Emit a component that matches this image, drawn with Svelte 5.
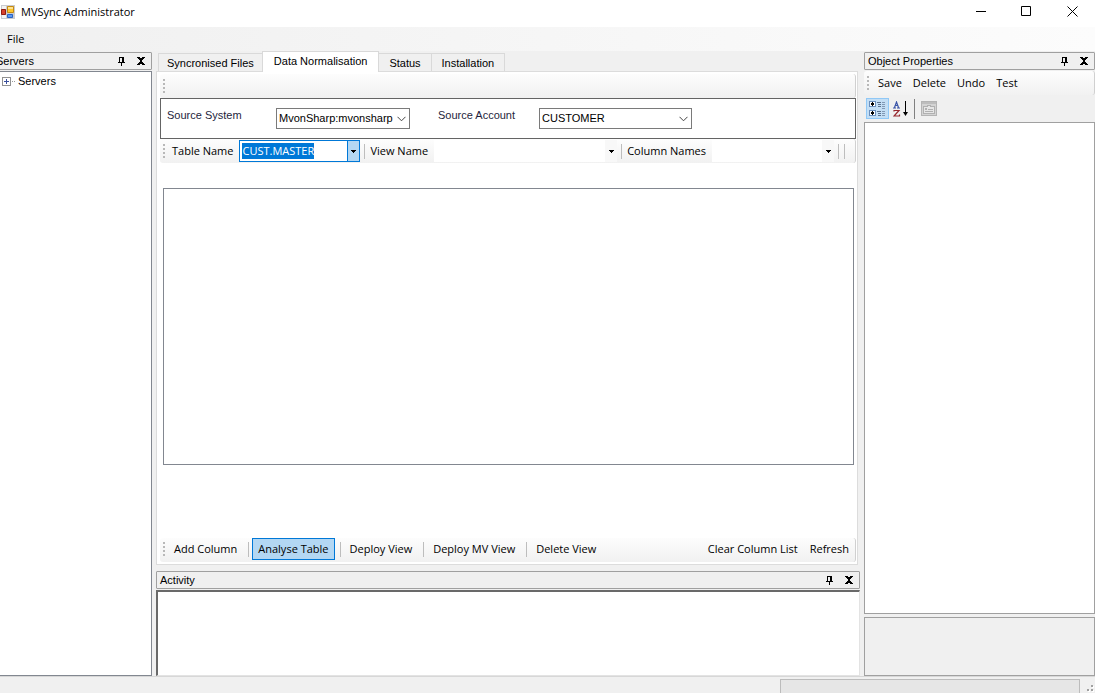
<script>
	import { onMount } from 'svelte';

	let tabs = ['Syncronised Files', 'Data Normalisation', 'Status', 'Installation'];
	let activeTab = $state('Data Normalisation');
	let sourceSystem = $state('MvonSharp:mvonsharp');
	let sourceAccount = $state('CUSTOMER');
	let tableName = $state('CUST.MASTER');
	let viewName = $state('');
	let columnName = $state('');
	let activity = $state('');
	let tableInput;

	const viewActions = ['Add Column', 'Analyse Table', 'Deploy View', 'Deploy MV View', 'Delete View'];
	const objectActions = ['Save', 'Delete', 'Undo', 'Test'];

	onMount(() => {
		tableInput.focus();
		tableInput.select();
	});
</script>

{#snippet grip()}
	<svg class="grip" width="3" height="14" viewBox="0 0 3 14" shape-rendering="crispEdges">
		<path d="M0 0h2v2H0zM0 4h2v2H0zM0 8h2v2H0zM0 12h2v2H0z" fill="#b8b8b8" />
	</svg>
{/snippet}

{#snippet panelTitle(title)}
	<header class="panel-title">
		<h2>{title}</h2>
		<button type="button" aria-label="Auto hide {title}">
			<svg width="7" height="9" viewBox="0 0 7 9" shape-rendering="crispEdges">
				<path d="M1 0h5v5h1v1H4v3H3V6H0V5h1zM2 1v4h2V1z" fill="#000" fill-rule="evenodd" />
			</svg>
		</button>
		<button type="button" aria-label="Close {title}">
			<svg width="8" height="8" viewBox="0 0 8 8" shape-rendering="crispEdges">
				<path
					d="M0 0h3v1h2V0h3v1H7v1H6v1H5v2h1v1h1v1h1v1H5V7H3v1H0V7h1V6h1V5h1V3H2V2H1V1H0z"
				/>
			</svg>
		</button>
	</header>
{/snippet}

{#snippet arrow()}
	<svg width="5" height="3" viewBox="0 0 5 3" shape-rendering="crispEdges">
		<path d="M0 0h5v1H4v1H3v1H2V2H1V1H0z" />
	</svg>
{/snippet}

{#snippet chevron()}
	<svg class="chevron" width="9" height="6" viewBox="0 0 9 6">
		<path d="M.5 .8l4 4 4-4" fill="none" stroke="#444" />
	</svg>
{/snippet}

<div class="window">
	<header class="title-bar">
		<svg width="14" height="14" viewBox="0 0 14 14">
			<path d="M0 0h14v14H0z" fill="#c9cbd0" />
			<path d="M1 1h4v3H1zM1 10h4v3H1z" fill="#f3f3f3" />
			<path d="M6.500 1.500h6v6h-6z" fill="#ffc72e" stroke="#c58a12" />
			<path d="M7 2h5v2H7z" fill="#ffe391" />
			<path d="M.5 4.500h4v5h-4z" fill="#d6402b" stroke="#8e1b11" />
			<path d="M6.500 9.500h5v3h-5z" fill="#5c9af0" stroke="#2a62c4" />
		</svg>
		<h1>MVSync Administrator</h1>
		<div class="window-buttons">
			<button type="button" aria-label="Minimize">
				<svg width="11" height="11" viewBox="0 0 11 11"><path d="M1 5.500h10" stroke="#000" /></svg>
			</button>
			<button type="button" aria-label="Maximize">
				<svg width="11" height="11" viewBox="0 0 11 11">
					<path d="M.5 .5h9v9h-9z" fill="none" stroke="#000" />
				</svg>
			</button>
			<button type="button" aria-label="Close">
				<svg width="11" height="11" viewBox="0 0 11 11">
					<path d="M.5 .5l10 10M10.500 .5l-10 10" stroke="#000" />
				</svg>
			</button>
		</div>
	</header>

	<nav class="menu-bar">
		<button type="button">File</button>
	</nav>

	<main>
		<section class="panel servers">
			{@render panelTitle('Servers')}
			<ul class="tree">
				<li>
					<svg width="13" height="9" viewBox="0 0 13 9" shape-rendering="crispEdges">
						<path d="M.5 .5h8v8h-8z" fill="#fff" stroke="#919191" />
						<path d="M2 4h5v1H2zM4 2h1v5H4z" fill="#3a4f9c" />
						<path d="M10 4h1v1h-1zM12 4h1v1h-1z" fill="#999" />
					</svg>
					Servers
				</li>
			</ul>
		</section>

		<div class="center">
			<div class="tabs" role="tablist">
				{#each tabs as tab}
					<button
						type="button"
						role="tab"
						aria-selected={activeTab === tab}
						class:active={activeTab === tab}
						onclick={() => (activeTab = tab)}
					>
						{tab}
					</button>
				{/each}
			</div>

			<section class="tab-page">
				<div class="toolbar">{@render grip()}</div>

				<div class="source">
					<label for="system">Source System</label>
					<span class="select system">
						<select id="system" bind:value={sourceSystem}>
							<option>MvonSharp:mvonsharp</option>
						</select>
						{@render chevron()}
					</span>
					<label for="account">Source Account</label>
					<span class="select account">
						<select id="account" bind:value={sourceAccount}>
							<option>CUSTOMER</option>
						</select>
						{@render chevron()}
					</span>
				</div>

				<div class="toolbar names">
					{@render grip()}
					<label for="table">Table Name</label>
					<span class="combo table focused">
						<input id="table" type="text" bind:this={tableInput} bind:value={tableName} />
						<button type="button" aria-label="Show tables">{@render arrow()}</button>
					</span>
					<span class="separator"></span>
					<label for="view">View Name</label>
					<span class="combo view">
						<input id="view" type="text" bind:value={viewName} />
						<button type="button" aria-label="Show views">{@render arrow()}</button>
					</span>
					<span class="separator"></span>
					<label for="column">Column Names</label>
					<span class="combo column">
						<input id="column" type="text" bind:value={columnName} />
						<button type="button" aria-label="Show columns">{@render arrow()}</button>
					</span>
					<span class="separator"></span>
					<span class="separator"></span>
				</div>

				<div class="columns"></div>

				<div class="toolbar actions">
					{@render grip()}
					{#each viewActions as action, i}
						{#if i > 0}
							<span class="separator"></span>
						{/if}
						<button type="button" class:selected={action === 'Analyse Table'}>{action}</button>
					{/each}
					<span class="spacer"></span>
					<button type="button">Clear Column List</button>
					<button type="button">Refresh</button>
				</div>
			</section>

			<section class="panel activity">
				{@render panelTitle('Activity')}
				<textarea aria-label="Activity" bind:value={activity}></textarea>
			</section>
		</div>

		<section class="panel properties">
			{@render panelTitle('Object Properties')}
			<div class="toolbar objects">
				{@render grip()}
				{#each objectActions as action}
					<button type="button">{action}</button>
				{/each}
			</div>
			<div class="grid-tools">
				<button type="button" class="selected" aria-label="Categorized">
					<svg width="17" height="17" viewBox="0 0 17 17" shape-rendering="crispEdges">
						<path d="M.5 1.500h6v5h-6zM.5 10.500h6v5h-6z" fill="#fff" stroke="#6b8fbd" />
						<path d="M2 3h3v2H2zM3 2h1v4H3zM2 12h3v2H2zM3 11h1v4H3z" fill="#000" />
						<path
							d="M8 2h4v1H8zM9 4h3v1H9zM9 6h3v1H9zM8 11h4v1H8zM9 13h3v1H9zM9 15h3v1H9z"
							fill="#5c7390"
						/>
						<path
							d="M13 2h3v1h-3zM13 4h3v1h-3zM13 6h3v1h-3zM13 8h3v1h-3zM13 11h3v1h-3zM13 13h3v1h-3zM13 15h3v1h-3z"
							fill="#8199b5"
						/>
					</svg>
				</button>
				<button type="button" aria-label="Alphabetical">
					<svg width="16" height="16" viewBox="0 0 16 16">
						<path
							d="M0 7h3M4 7h3M1.500 6.500L3.500 1l2 5.500M2 4.500h3"
							fill="none"
							stroke="#3b55a8"
							stroke-width="1.200"
						/>
						<path
							d="M1 10.500V9.500h5L1 15h5.500v-1.500"
							fill="none"
							stroke="#96272d"
							stroke-width="1.200"
						/>
						<path d="M12 0h1v11h2l-2.500 4L10 11h2z" fill="#000" />
					</svg>
				</button>
				<span class="divider"></span>
				<button type="button" aria-label="Property pages" disabled>
					<svg width="16" height="15" viewBox="0 0 16 15" shape-rendering="crispEdges">
						<path d="M.5 .5h15v14H.5z" fill="#d4d4d4" stroke="#b4b4b4" />
						<path d="M1 1h14v2H1z" fill="#bdbdbd" />
						<path d="M2.500 5.500h4v-1h3v1h4v7h-11z" fill="#e6e6e6" stroke="#b0b0b0" />
						<path d="M4 7h2v2H4zM7 8h5v1H7zM4 10h8v1H4z" fill="#b0b0b0" />
					</svg>
				</button>
			</div>
			<div class="property-grid"></div>
			<div class="description"></div>
		</section>
	</main>

	<footer class="status-bar">
		<progress value="0" max="100" aria-label="Progress"></progress>
		<svg width="7" height="7" viewBox="0 0 7 7" shape-rendering="crispEdges">
			<path d="M5 1h2v2H5zM1 5h2v2H1zM5 5h2v2H5z" fill="#fff" />
			<path d="M4 0h2v2H4zM0 4h2v2H0zM4 4h2v2H4z" fill="#a0a0a0" />
		</svg>
	</footer>
</div>

<style>
	:global(body) {
		margin: 0;
		background: #f0f0f0;
	}

	.window {
		display: flex;
		flex-direction: column;
		min-height: 100vh;
		overflow: hidden;
		background: #f0f0f0;
		color: #000;
		font: 11px/16px 'Liberation Sans', Arial, sans-serif;
	}

	.window :global(*) {
		box-sizing: border-box;
	}

	button,
	input,
	select,
	textarea {
		margin: 0;
		padding: 0;
		border: 0;
		border-radius: 0;
		outline: none;
		background: none;
		color: inherit;
		font: inherit;
	}

	svg {
		display: block;
		flex: none;
	}

	h1,
	h2 {
		margin: 0;
		font-size: inherit;
		font-weight: normal;
	}

	.title-bar {
		display: flex;
		align-items: center;
		gap: 6px;
		height: 27px;
		padding: 0 0 4px 1px;
		background: #fff;
		font-family: 'Open Sans', 'Segoe UI', sans-serif;
	}

	.window-buttons {
		display: flex;
		margin-left: auto;
	}

	.window-buttons button {
		display: flex;
		justify-content: center;
		align-items: center;
		width: 46px;
		height: 23px;
	}

	.menu-bar {
		height: 24px;
		padding: 4px 7px;
		background: linear-gradient(to right, #f0f0f0, #fcfcfc);
		font-family: 'Open Sans', 'Segoe UI', sans-serif;
	}

	.menu-bar button {
		display: block;
	}

	main {
		flex: 1;
		display: grid;
		grid-template-columns: 152px minmax(0, 1fr) 231px;
		gap: 4px;
	}

	.panel {
		display: flex;
		flex-direction: column;
	}

	.panel-title {
		display: flex;
		align-items: center;
		gap: 12px;
		height: 18px;
		margin-bottom: 1px;
		padding: 0 6px 0 3px;
		border: 1px solid #a0a0a0;
		border-radius: 1px;
	}

	.panel-title h2 {
		flex: 1;
		line-height: 18px;
	}

	.servers {
		margin-left: -8px;
		padding-top: 1px;
	}

	.tree {
		flex: 1;
		margin: 0;
		padding: 0 9px;
		border: 1px solid #828790;
		background: #fff;
		list-style: none;
	}

	.tree li {
		display: flex;
		align-items: center;
		gap: 3px;
		height: 18px;
	}

	.center {
		display: flex;
		flex-direction: column;
	}

	.tabs {
		display: flex;
		align-items: flex-end;
		height: 20px;
		padding-left: 2px;
	}

	.tabs button {
		height: 18px;
		padding: 1px 10px 0;
		border: 1px solid #d9d9d9;
		border-bottom: 0;
		border-left-width: 0;
	}

	.tabs button:first-child {
		border-left-width: 1px;
		padding: 1px 8px 0;
	}

	.tabs button.active {
		position: relative;
		height: 21px;
		margin: 0 0 -1px -1px;
		padding: 0 11px 2px;
		border-left-width: 1px;
		background: #fff;
	}

	.tab-page {
		flex: 1;
		display: flex;
		flex-direction: column;
		margin-right: 2px;
		padding: 2px 1px 2px 3px;
		border: 1px solid #dcdcdc;
		background: #fff;
	}

	.toolbar {
		display: flex;
		align-items: center;
		height: 24px;
		padding-left: 3px;
		border-right: 1px solid #d0d0d0;
		border-radius: 3px;
		background: linear-gradient(#fdfdfd, #f1f1f1);
		font-family: 'Open Sans', 'Segoe UI', sans-serif;
		white-space: nowrap;
	}

	.separator {
		flex: none;
		width: 1px;
		height: 15px;
		background: #bdbdbd;
	}

	.spacer {
		flex: 1;
	}

	.source {
		display: flex;
		height: 41px;
		padding: 9px 6px;
		border: 1px solid #646464;
	}

	.source label {
		color: #1e1e3c;
		line-height: 14px;
	}

	.source label:first-child {
		width: 109px;
	}

	.source label:nth-of-type(2) {
		width: 101px;
		margin-left: 28px;
	}

	.select {
		position: relative;
		height: 21px;
	}

	.select.system {
		width: 134px;
	}

	.select.account {
		width: 153px;
	}

	.select select {
		width: 100%;
		height: 100%;
		padding: 0 14px 1px 2px;
		border: 1px solid #7a7a7a;
		background: #fff;
		appearance: none;
	}

	.chevron {
		position: absolute;
		top: 8px;
		right: 4px;
		pointer-events: none;
	}

	.names .grip {
		margin-right: 6px;
	}

	.names label {
		margin-right: 6px;
	}

	.names .separator {
		margin: 0 5px 0 4px;
	}

	.names .separator:last-child {
		margin: 0 10px 0 0;
	}

	.combo {
		display: flex;
		min-width: 0;
		height: 22px;
		background: #fff;
	}

	.combo input {
		flex: 1;
		min-width: 0;
		padding: 0 2px;
	}

	.combo input::selection {
		background: #0078d7;
		color: #fff;
	}

	.combo button {
		display: flex;
		justify-content: center;
		align-items: center;
		width: 12px;
		background: #f8f8f8;
	}

	.combo.focused {
		border: 1px solid #0078d7;
	}

	.combo.focused button {
		border-left: 1px solid #0078d7;
		background: #b3d7f3;
	}

	.combo.table {
		width: 121px;
	}

	.combo.view {
		flex: 180;
	}

	.combo.column {
		flex: 120;
	}

	.columns {
		flex: 1;
		margin: 25px 2px 73px 3px;
		border: 1px solid #828790;
	}

	.actions {
		padding-bottom: 2px;
	}

	.actions .grip {
		margin-right: 2px;
	}

	.actions button {
		height: 22px;
		padding: 0 5px;
		border: 1px solid transparent;
	}

	.actions .separator {
		margin: 0 3px 0 5px;
	}

	.actions button.selected {
		border-color: #0078d7;
		background: #b3d7f3;
	}

	.activity {
		height: 105px;
		margin-top: 6px;
	}

	.activity textarea {
		flex: 1;
		border: 1px solid #e3e3e3;
		border-top: 2px solid #696969;
		border-left: 2px solid #696969;
		background: #fff;
		resize: none;
	}

	.properties {
		padding-top: 1px;
	}

	.objects {
		gap: 1px;
	}

	.objects .grip {
		margin-right: 2px;
	}

	.objects button {
		padding: 0 5px;
	}

	.grid-tools {
		display: flex;
		align-items: center;
		height: 27px;
		padding-left: 2px;
	}

	.grid-tools button {
		display: flex;
		justify-content: center;
		align-items: center;
		width: 23px;
		height: 21px;
	}

	.grid-tools button.selected {
		border: 1px solid #90c8f6;
		background: #c3def5;
	}

	.divider {
		width: 1px;
		height: 20px;
		margin: 0 2px;
		background: #808080;
	}

	.property-grid {
		flex: 1;
		border: 1px solid #a0a0a0;
		background: #fff;
	}

	.description {
		height: 59px;
		margin-top: 3px;
		border: 1px solid #a0a0a0;
	}

	.status-bar {
		display: flex;
		justify-content: flex-end;
		gap: 7px;
		height: 17px;
		padding: 2px 1px 0 0;
		border-top: 1px solid #d7d7d7;
		overflow: hidden;
	}

	.status-bar svg {
		margin-top: 6px;
	}

	progress {
		width: 300px;
		height: 18px;
		border: 1px solid #bcbcbc;
		background: #e6e6e6;
		appearance: none;
	}

	progress::-webkit-progress-bar {
		background: #e6e6e6;
	}
</style>
